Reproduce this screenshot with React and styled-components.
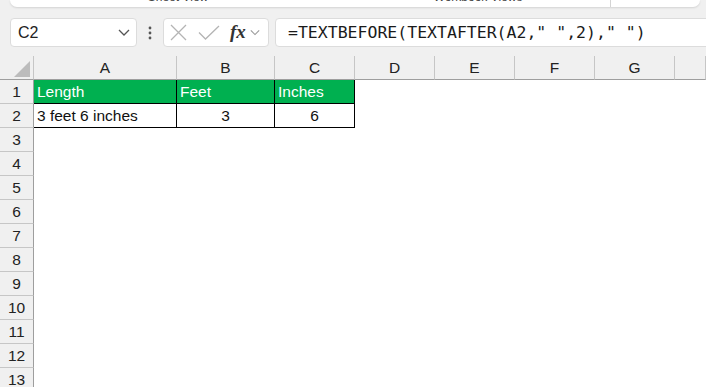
import { Fragment } from 'react';
import styled, { createGlobalStyle } from 'styled-components';

const GlobalStyle = createGlobalStyle`
  html, body {
    margin: 0;
    padding: 0;
    background: #f0f0f0;
    overflow: hidden;
  }
  body {
    font-family: 'Liberation Sans', Arial, sans-serif;
  }
`;

const Page = styled.div`
  width: 706px;
  height: 387px;
  overflow: hidden;
  background: #f0f0f0;
`;

const RibbonStrip = styled.div`
  display: grid;
  grid-template-columns: 336px 264px 1fr;
  height: 7px;
  margin: 0 6px 0 10px;
  background: #fff;
  border-radius: 0 0 7px 7px;
  box-shadow: 0 1px 2px rgba(0, 0, 0, 0.12);
  overflow: hidden;
`;

const RibbonGroup = styled.div`
  display: flex;
  justify-content: center;
  border-left: ${(p) => (p.$divider ? '1px solid #d4d4d4' : 'none')};
  span {
    font-size: 12px;
    line-height: 12px;
    margin-top: -9px;
    color: #444;
  }
`;

const FormulaBar = styled.div`
  display: flex;
  align-items: center;
  height: 29px;
  margin-top: 11px;
  padding-left: 10px;
`;

const Box = styled.div`
  box-sizing: border-box;
  display: flex;
  align-items: center;
  height: 29px;
  background: #fff;
  border: 1px solid #dcdcdc;
  border-radius: 4px;
`;

const NameBox = styled(Box)`
  width: 127px;
  padding: 0 6px 0 7px;
  justify-content: space-between;
  font-size: 16px;
  color: #222;
`;

const Dots = styled.div`
  width: 26px;
  display: flex;
  justify-content: center;
`;

const FxBox = styled(Box)`
  width: 106px;
  padding: 0 4px 0 6px;
`;

const FxLabel = styled.span`
  font-family: 'Liberation Serif', 'Times New Roman', serif;
  font-style: italic;
  font-weight: bold;
  font-size: 19px;
  color: #333;
  margin: -2px 4px 0 10px;
`;

const FormulaInput = styled(Box)`
  flex: 1;
  margin-left: 6px;
  margin-right: -8px;
  padding-left: 12px;
  font-family: 'DejaVu Sans Mono', 'Liberation Mono', monospace;
  font-size: 16.5px;
  color: #1a1a1a;
  white-space: pre;
`;

const Sheet = styled.div`
  display: grid;
  grid-template-columns: 34px 143px 98px 80px 80px 80px 80px 80px 1fr;
  grid-auto-rows: 24px;
  margin-top: 9px;
  background: #fff;
`;

const Corner = styled.div`
  box-sizing: border-box;
  position: relative;
  background: #f0f0f0;
  border-right: 1px solid #c6c6c6;
  border-bottom: 1px solid #9e9e9e;
  &::after {
    content: '';
    position: absolute;
    right: 3px;
    bottom: 2px;
    border-left: 16px solid transparent;
    border-bottom: 16px solid #bcbcbc;
  }
`;

const ColHead = styled.div`
  box-sizing: border-box;
  display: flex;
  align-items: center;
  justify-content: center;
  background: #f0f0f0;
  border-right: 1px solid #c6c6c6;
  border-bottom: 1px solid #9e9e9e;
  font-size: 15.5px;
  color: #222;
`;

const RowHead = styled.div`
  box-sizing: border-box;
  display: flex;
  align-items: center;
  justify-content: center;
  background: #f0f0f0;
  border-right: 1px solid #9e9e9e;
  border-bottom: 1px solid #c6c6c6;
  font-size: 15.5px;
  color: #222;
`;

const Cell = styled.div`
  box-sizing: border-box;
  display: flex;
  align-items: center;
  justify-content: ${(p) => (p.$align === 'center' ? 'center' : 'flex-start')};
  padding: 0 3px;
  background: ${(p) => p.$fill || '#fff'};
  color: ${(p) => p.$color || '#111'};
  border-right: 1px solid ${(p) => (p.$border ? '#000' : 'transparent')};
  border-bottom: 1px solid ${(p) => (p.$border ? '#000' : 'transparent')};
  font-size: 15.5px;
  white-space: nowrap;
  overflow: hidden;
`;

const Chevron = ({ color = '#555', w = 12 }) => (
  <svg width={w} height="7" viewBox="0 0 12 7" fill="none">
    <path d="M1 1l5 5 5-5" stroke={color} strokeWidth="1.3" />
  </svg>
);

const cols = ['A', 'B', 'C', 'D', 'E', 'F', 'G', ''];

const data = {
  1: [
    { t: 'Length', border: true, fill: '#00b050', color: '#fff' },
    { t: 'Feet', border: true, fill: '#00b050', color: '#fff' },
    { t: 'Inches', border: true, fill: '#00b050', color: '#fff' },
  ],
  2: [
    { t: '3 feet 6 inches', border: true },
    { t: '3', border: true, align: 'center' },
    { t: '6', border: true, align: 'center' },
  ],
};

const App = () => {
  const rows = Array.from({ length: 13 }, (_, i) => i + 1);
  return (
    <Page>
      <GlobalStyle />
      <RibbonStrip>
        <RibbonGroup><span>Sheet View</span></RibbonGroup>
        <RibbonGroup><span>Workbook Views</span></RibbonGroup>
        <RibbonGroup $divider />
      </RibbonStrip>

      <FormulaBar>
        <NameBox>
          <span>C2</span>
          <Chevron />
        </NameBox>
        <Dots>
          <svg width="4" height="14" viewBox="0 0 4 14">
            <circle cx="2" cy="2" r="1.4" fill="#555" />
            <circle cx="2" cy="7" r="1.4" fill="#555" />
            <circle cx="2" cy="12" r="1.4" fill="#555" />
          </svg>
        </Dots>
        <FxBox>
          <svg width="17" height="17" viewBox="0 0 17 17">
            <path d="M1 1l15 15M16 1L1 16" stroke="#b4b4b4" strokeWidth="1.3" />
          </svg>
          <svg width="22" height="15" viewBox="0 0 22 15" style={{ marginLeft: 11 }}>
            <path d="M1 7.5l6.5 6.5L21 1" stroke="#b4b4b4" strokeWidth="1.3" fill="none" />
          </svg>
          <FxLabel>fx</FxLabel>
          <Chevron color="#999" w={10} />
        </FxBox>
        <FormulaInput>=TEXTBEFORE(TEXTAFTER(A2," ",2)," ")</FormulaInput>
      </FormulaBar>

      <Sheet>
        <Corner />
        {cols.map((c, i) => (
          <ColHead key={i}>{c}</ColHead>
        ))}
        {rows.map((r) => (
          <Fragment key={r}>
            <RowHead>{r}</RowHead>
            {cols.map((c, i) => {
              const d = data[r] && data[r][i];
              return d ? (
                <Cell key={i} $border={d.border} $fill={d.fill} $color={d.color} $align={d.align}>
                  {d.t}
                </Cell>
              ) : (
                <Cell key={i} />
              );
            })}
          </Fragment>
        ))}
      </Sheet>
    </Page>
  );
};

export default App;
